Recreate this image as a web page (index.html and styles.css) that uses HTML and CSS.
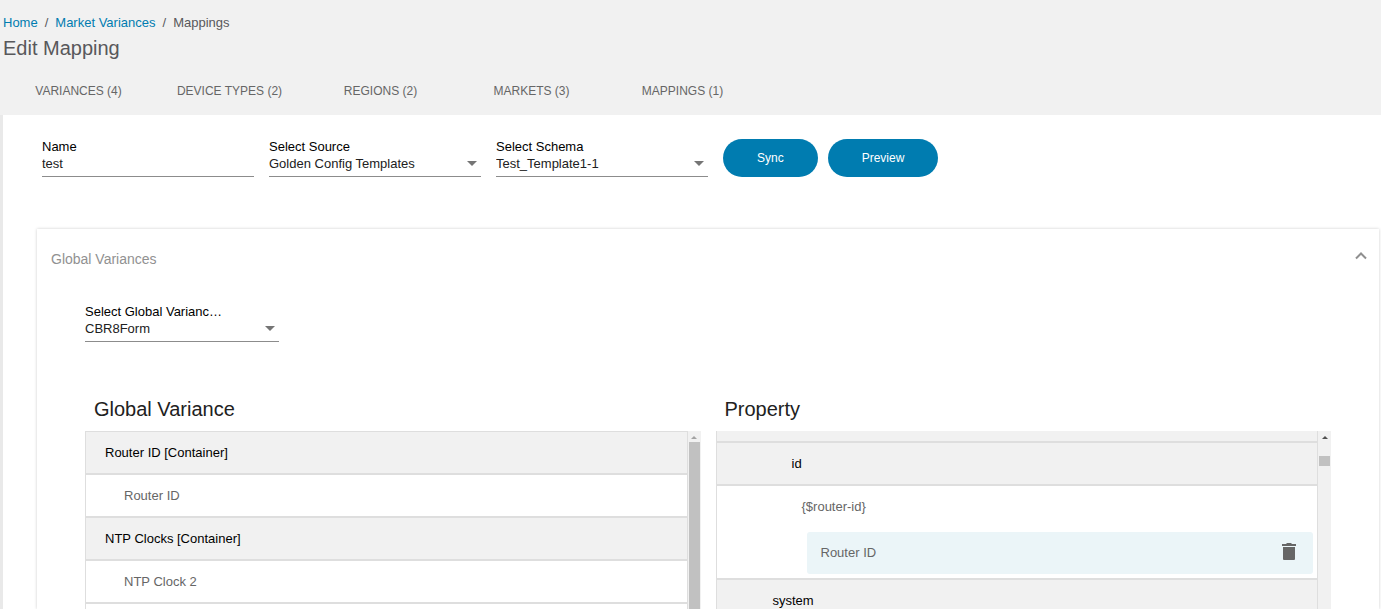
FILE: index.html
```html
<!DOCTYPE html>
<html lang="en">
<head>
    <meta charset="UTF-8">
    <meta name="viewport" content="width=device-width, initial-scale=1.0">
    <title>Edit Mapping</title>
    <link rel="stylesheet" href="styles.css">
</head>
<body>
    <!-- Header -->
    <header class="page-header">
        <nav class="breadcrumb">
            <a href="#">Home</a>
            <span>/</span>
            <a href="#">Market Variances</a>
            <span>/</span>
            <span>Mappings</span>
        </nav>
        <h1 class="page-title">Edit Mapping</h1>
        <nav class="tabs">
            <a href="#" class="tab">VARIANCES (4)</a>
            <a href="#" class="tab">DEVICE TYPES (2)</a>
            <a href="#" class="tab">REGIONS (2)</a>
            <a href="#" class="tab">MARKETS (3)</a>
            <a href="#" class="tab">MAPPINGS (1)</a>
        </nav>
    </header>

    <main class="content">
        <!-- Mapping form -->
        <form class="mapping-form">
            <div class="field">
                <label for="name">Name</label>
                <input type="text" id="name" value="test">
            </div>
            <div class="field field-select">
                <label for="source">Select Source</label>
                <select id="source">
                    <option>Golden Config Templates</option>
                </select>
            </div>
            <div class="field field-select">
                <label for="schema">Select Schema</label>
                <select id="schema">
                    <option>Test_Template1-1</option>
                </select>
            </div>
            <div class="form-buttons">
                <button type="button" class="btn">Sync</button>
                <button type="button" class="btn">Preview</button>
            </div>
        </form>

        <!-- Global variances panel -->
        <section class="panel">
            <div class="panel-header">
                <h2 class="panel-title">Global Variances</h2>
                <button type="button" class="icon-btn" aria-label="Collapse">
                    <svg width="12" height="14" viewBox="0 0 12 14" fill="none" stroke="#8f8f8f" stroke-width="2"><path d="M1 6.500l5-5 5 5"/></svg>
                </button>
            </div>

            <div class="panel-body">
                <div class="field field-select field-variance">
                    <label for="variance">Select Global Varianc…</label>
                    <select id="variance">
                        <option>CBR8Form</option>
                    </select>
                </div>

                <div class="columns">
                    <div class="column">
                        <h3 class="column-title">Global Variance</h3>
                        <div class="list-box">
                            <ul class="list">
                                <li class="row row-head">Router ID [Container]</li>
                                <li class="row row-item">Router ID</li>
                                <li class="row row-head">NTP Clocks [Container]</li>
                                <li class="row row-item">NTP Clock 2</li>
                                <li class="row row-item"></li>
                            </ul>
                            <div class="scrollbar scrollbar-off">
                                <span class="scroll-arrow"></span>
                                <span class="scroll-thumb thumb-long"></span>
                            </div>
                        </div>
                    </div>

                    <div class="column">
                        <h3 class="column-title">Property</h3>
                        <div class="list-box">
                            <ul class="list">
                                <li class="row row-head row-partial"></li>
                                <li class="row row-head level-4">id</li>
                                <li class="row-drop">
                                    <div class="drop-name">{$router-id}</div>
                                    <div class="chip">
                                        <span>Router ID</span>
                                        <button type="button" class="icon-btn" aria-label="Delete">
                                            <svg width="14" height="20" viewBox="0 0 14 20" fill="#666"><path d="M0 1h4l1-1h4l1 1h4v2H0zM1 4h12v12a1 1 0 0 1-1 1H2a1 1 0 0 1-1-1z"/></svg>
                                        </button>
                                    </div>
                                </li>
                                <li class="row row-head level-3">system</li>
                            </ul>
                            <div class="scrollbar">
                                <span class="scroll-arrow"></span>
                                <span class="scroll-thumb thumb-short"></span>
                            </div>
                        </div>
                    </div>
                </div>
            </div>
        </section>
    </main>
</body>
</html>
```
FILE: styles.css
```css
:root {
    --blue: #007cb0;
    --light-gray: #f1f1f1;
    --border-gray: #dedede;
    --text-gray: #666;
}

* {
    margin: 0;
    padding: 0;
    box-sizing: border-box;
    font-family: 'Liberation Sans', Arial, sans-serif;
}

body {
    display: flex;
    flex-direction: column;
    height: 100vh;
    overflow: hidden;
    background-color: var(--light-gray);
    font-size: 13px;
    line-height: 16px;
    color: #212121;
}

/* Header */
.page-header {
    padding: 15px 3px 0;
    color: #58585b;
}

.breadcrumb {
    display: flex;
    gap: 7px;
}

.breadcrumb a {
    color: var(--blue);
    text-decoration: none;
}

.page-title {
    margin-top: 5px;
    font-size: 20px;
    font-weight: 400;
    line-height: 24px;
}

.tabs {
    display: flex;
    margin-top: 7px;
}

.tab {
    width: 151px;
    font-size: 12px;
    line-height: 48px;
    text-align: center;
    color: var(--text-gray);
    text-decoration: none;
}

/* Form */
.content {
    display: flex;
    flex-direction: column;
    flex: 1;
    min-height: 0;
    padding: 24px 2px 0 34px;
    border-left: 3px solid #e9e9e9;
    background-color: #fff;
}

.mapping-form {
    display: flex;
    gap: 15px;
    padding-left: 5px;
}

.field {
    position: relative;
    width: 212px;
}

.field label {
    display: block;
    color: #000;
}

.field input,
.field select {
    display: block;
    width: 100%;
    height: 22px;
    padding-bottom: 4px;
    border: none;
    border-bottom: 1px solid #8c8c8c;
    border-radius: 0;
    outline: none;
    appearance: none;
    background: none;
    font-size: 13px;
    color: #212121;
}

.field-select::after {
    content: '';
    position: absolute;
    right: 4px;
    bottom: 11px;
    border: 5px solid transparent;
    border-top-color: #757575;
    border-bottom: none;
}

.form-buttons {
    display: flex;
    gap: 10px;
}

.btn {
    height: 38px;
    padding: 0 34px;
    border: none;
    border-radius: 19px;
    background-color: var(--blue);
    color: #fff;
    font-size: 12px;
    cursor: pointer;
}

/* Panel */
.panel {
    display: flex;
    flex-direction: column;
    flex: 1;
    min-height: 0;
    margin-top: 52px;
    box-shadow: 0 0 3px rgba(0, 0, 0, 0.2);
}

.panel-header {
    display: flex;
    justify-content: space-between;
    align-items: center;
    padding: 20px 12px 20px 14px;
}

.panel-title {
    font-size: 14px;
    font-weight: 400;
    line-height: 20px;
    color: #919191;
}

.icon-btn {
    display: flex;
    border: none;
    background: none;
    cursor: pointer;
}

.panel-body {
    display: flex;
    flex-direction: column;
    flex: 1;
    min-height: 0;
    padding: 15px 48px 0;
}

.field-variance {
    width: 194px;
}

/* Lists */
.columns {
    display: grid;
    grid-template-columns: 1fr 1fr;
    gap: 15px;
    flex: 1;
    min-height: 0;
    margin-top: 55px;
}

.column {
    display: flex;
    flex-direction: column;
    min-height: 0;
}

.column-title {
    padding: 0 9px 10px;
    font-size: 20px;
    font-weight: 400;
    line-height: 24px;
}

.list-box {
    display: flex;
    flex: 1;
    min-height: 0;
    overflow: hidden;
}

.list {
    flex: 1;
    border: 1px solid var(--border-gray);
    border-width: 0 1px;
    list-style: none;
}

.row {
    height: 43px;
    padding: 0 19px;
    border: 1px solid var(--border-gray);
    border-width: 1px 0;
    line-height: 41px;
}

.row-head {
    background-color: var(--light-gray);
    color: #000;
}

.row-item {
    padding-left: 38px;
    color: var(--text-gray);
}

.row-partial {
    height: 11px;
    border-top: none;
}

.level-3 {
    padding-left: 56px;
}

.level-4 {
    padding-left: 75px;
}

.row-drop {
    padding: 0 4px 4px 85px;
    border: 1px solid var(--border-gray);
    border-width: 1px 0;
    color: var(--text-gray);
}

.drop-name {
    height: 46px;
    line-height: 41px;
}

.chip {
    display: flex;
    justify-content: space-between;
    align-items: center;
    height: 42px;
    margin-left: 5px;
    padding: 0 17px 0 14px;
    border-radius: 3px;
    background-color: #ebf5f8;
}

/* Scrollbars */
.scrollbar {
    display: flex;
    flex-direction: column;
    align-items: center;
    width: 13px;
    background-color: var(--light-gray);
}

.scroll-arrow {
    margin: 5px 0 3px;
    border: 3px solid transparent;
    border-top: none;
    border-bottom-color: #505050;
}

.scrollbar-off .scroll-arrow {
    border-bottom-color: #a3a3a3;
}

.scroll-thumb {
    width: 11px;
    background-color: #c1c1c1;
}

.thumb-long {
    flex: 1;
}

.thumb-short {
    height: 10px;
    margin-top: 14px;
}
```
